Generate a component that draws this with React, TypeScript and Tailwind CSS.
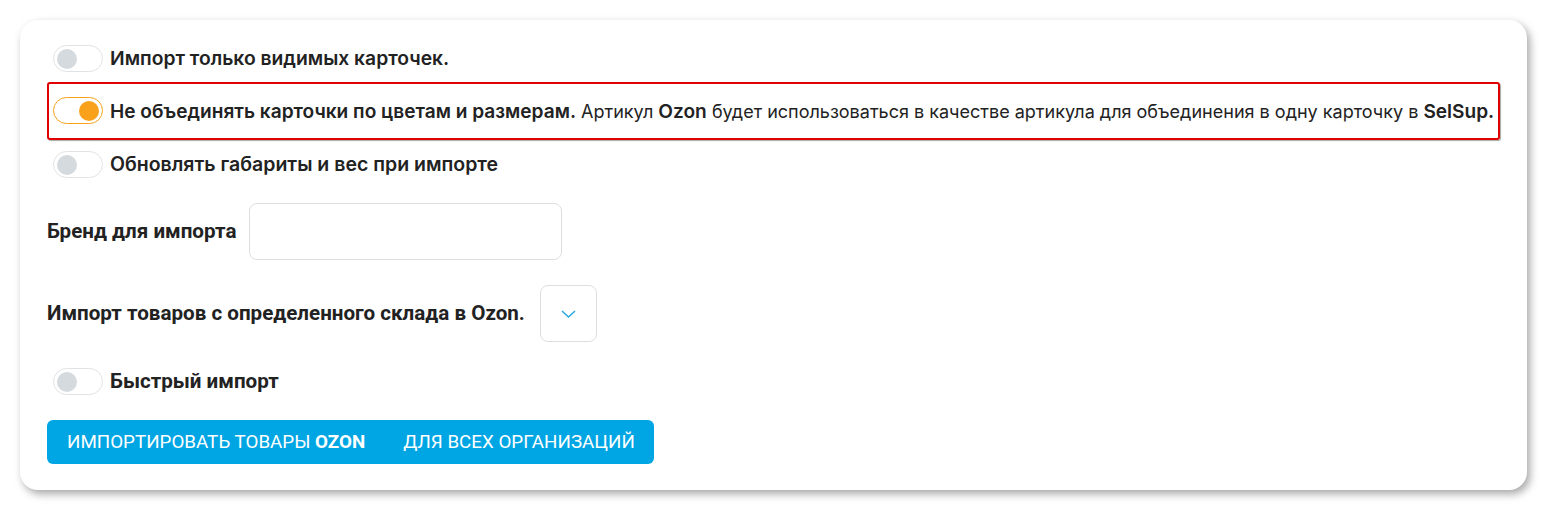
import React from 'react';

function Toggle({ on = false }: { on?: boolean }) {
  return (
    <span
      className={
        'relative inline-flex h-[27px] w-[50px] shrink-0 items-center rounded-full border bg-white px-[3px] ' +
        (on ? 'justify-end border-[#f9a11b]' : 'justify-start border-[#dfe3e6]')
      }
    >
      <span className={'h-[20px] w-[20px] rounded-full ' + (on ? 'bg-[#f9a11b]' : 'bg-[#d4dade]')} />
    </span>
  );
}

export default function App() {
  return (
    <div className="min-h-[510px] w-full bg-white p-5 font-['Inter',sans-serif] text-[#222]">
      <div className="rounded-[18px] bg-white px-[27px] pb-[26px] pt-[25px] shadow-[3px_4px_8px_rgba(0,0,0,0.35)]">
        <div className="flex flex-col">
          <label className="flex h-[27px] items-center gap-[7px] pl-[6px]">
            <Toggle />
            <span className="text-[19.3px] font-semibold">Импорт только видимых карточек.</span>
          </label>

          <div className="mt-[10px] flex h-[58px] items-center rounded-[3px] border-2 border-[#e00000] pl-[4px] shadow-[1px_1px_1px_rgba(0,0,0,0.35)]">
            <label className="flex items-center gap-[7px]">
              <Toggle on />
              <span className="whitespace-nowrap text-[18.02px]">
                <b className="text-[19.1px] font-semibold">Не объединять карточки по цветам и размерам.</b> Артикул{' '}
                <b className="text-[19.1px] font-semibold">Ozon</b> будет использоваться в качестве артикула для
                объединения в одну карточку в <b className="text-[19.1px] font-semibold">SelSup.</b>
              </span>
            </label>
          </div>

          <label className="mt-[11px] flex h-[27px] items-center gap-[7px] pl-[6px]">
            <Toggle />
            <span className="text-[19.5px] font-semibold">Обновлять габариты и вес при импорте</span>
          </label>

          <div className="mt-[25px] flex items-center gap-[13px] font-['Roboto',sans-serif]">
            <span className="text-[20.6px] font-bold">Бренд для импорта</span>
            <input className="h-[57px] w-[313px] rounded-[8px] border border-[#dcdfe2] bg-white outline-none" />
          </div>

          <div className="mt-[25px] flex items-center gap-[15px] font-['Roboto',sans-serif]">
            <span className="text-[20.6px] font-bold">Импорт товаров с определенного склада в Ozon.</span>
            <button className="flex h-[57px] w-[57px] items-center justify-center rounded-[8px] border border-[#dcdfe2] bg-white">
              <svg width="15" height="8" viewBox="0 0 15 8" fill="none">
                <path d="M1 1l6.5 6 6.5-6" stroke="#29a8e0" strokeWidth="1.5" />
              </svg>
            </button>
          </div>

          <label className="mt-[26px] flex h-[27px] items-center gap-[7px] pl-[6px] font-['Roboto',sans-serif]">
            <Toggle />
            <span className="text-[20.6px] font-bold">Быстрый импорт</span>
          </label>

          <div className="mt-[25px]">
            <button className="flex h-[44px] items-center gap-[38px] rounded-[6px] bg-[#00a6e4] pl-5 pr-[19px] font-['Roboto',sans-serif] text-[18.8px] text-white">
              <span>
                ИМПОРТИРОВАТЬ ТОВАРЫ <b className="font-bold">OZON</b>
              </span>
              <span>ДЛЯ ВСЕХ ОРГАНИЗАЦИЙ</span>
            </button>
          </div>
        </div>
      </div>
    </div>
  );
}
